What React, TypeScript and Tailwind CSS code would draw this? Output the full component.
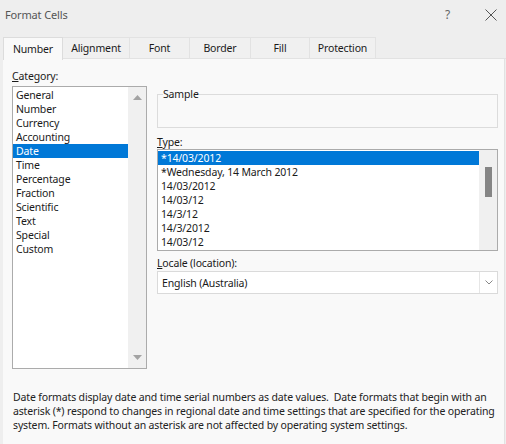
import React from 'react';

const categories = ['General', 'Number', 'Currency', 'Accounting', 'Date', 'Time', 'Percentage', 'Fraction', 'Scientific', 'Text', 'Special', 'Custom'];
const types = ['*14/03/2012', '*Wednesday, 14 March 2012', '14/03/2012', '14/03/12', '14/3/12', '14/3/2012', '14/03/12'];
const tabs = ['Number', 'Alignment', 'Font', 'Border', 'Fill', 'Protection'];
const tabWidths = ['w-[60px]', 'w-[67px]', 'w-[60px]', 'w-[61px]', 'w-[59px]', 'w-[66px]'];

const App: React.FC = () => {
  return (
    <div className="w-[506px] h-[444px] bg-[#eeeeee] text-[10.5px] tracking-[-0.15px] leading-[14px] text-[#1a1a1a] overflow-hidden font-['Segoe_UI','Noto_Sans',sans-serif]">
      {/* title bar */}
      <div className="h-[37px] flex items-start pt-[8px] pl-[5px] pr-[9px]">
        <span className="text-[#555] text-[11px]">Format Cells</span>
        <span className="ml-auto mr-[35px] text-[#666] text-[12px]">?</span>
        <svg width="12" height="12" viewBox="0 0 12 12" className="mt-[1px]">
          <path d="M0.5 0.5 L11.5 11.5 M11.5 0.5 L0.5 11.5" stroke="#555" strokeWidth="1" />
        </svg>
      </div>

      {/* tabs */}
      <div className="flex ml-[3px] h-[22px]">
        {tabs.map((t, i) => (
          <div
            key={t}
            className={`${tabWidths[i]} flex items-center justify-center border-t border-r ${i === 0 ? 'bg-[#f9f9f9] border-l border-[#dcdcdc] relative z-10 h-[23px]' : 'bg-[#f0f0f0] border-[#e2e2e2] border-b'}`}
          >
            {t}
          </div>
        ))}
        <div className="flex-1 border-b border-[#e2e2e2]" />
      </div>

      {/* panel */}
      <div className="ml-[3px] w-[502px] h-[385px] bg-[#f9f9f9] border-r border-[#e2e2e2] pt-[10px] pl-[9px]">
        <div className="flex">
          {/* left column */}
          <div className="w-[135px]">
            <div className="h-[14px]"><span className="underline">C</span>ategory:</div>
            <div className="mt-[3px] h-[283px] border border-[#ababab] bg-white flex">
              <div className="flex-1 pt-[1px]">
                {categories.map(c => (
                  <div key={c} className={`h-[14px] pl-[3px] ${c === 'Date' ? 'bg-[#0078d7] text-white' : ''}`}>{c}</div>
                ))}
              </div>
              <div className="w-[18px] bg-[#f0f0f0] flex flex-col items-center justify-between py-[8px]">
                <svg width="9" height="5" viewBox="0 0 9 5"><path d="M0 5 L4.5 0 L9 5 Z" fill="#a3a3a3" /></svg>
                <svg width="9" height="5" viewBox="0 0 9 5"><path d="M0 0 L4.5 5 L9 0 Z" fill="#a3a3a3" /></svg>
              </div>
            </div>
          </div>

          {/* right column */}
          <div className="ml-[10px] w-[341px] pt-[18px]">
            <fieldset className="h-[41px] border border-[#dcdcdc] px-[5px]">
              <legend className="px-0 leading-[14px]">Sample</legend>
            </fieldset>
            <div className="mt-[7px] h-[14px]"><span className="underline">T</span>ype:</div>
            <div className="h-[102px] border border-[#ababab] bg-white flex">
              <div className="flex-1 pt-[1px]">
                {types.map((t, i) => (
                  <div key={i} className={`h-[14px] pl-[3px] ${i === 0 ? 'bg-[#0078d7] text-white' : ''}`}>{t}</div>
                ))}
              </div>
              <div className="w-[18px] bg-[#f0f0f0] pt-[17px] flex justify-center">
                <div className="w-[7px] h-[30px] bg-[#858585]" />
              </div>
            </div>
            <div className="mt-[5px] h-[14px]"><span className="underline">L</span>ocale (location):</div>
            <div className="mt-[1px] h-[23px] border border-[#dadada] bg-white flex items-center">
              <span className="pl-[4px] flex-1">English (Australia)</span>
              <div className="w-[18px] h-full border-l border-[#e6e6e6] flex items-center justify-center">
                <svg width="8" height="5" viewBox="0 0 8 5"><path d="M0.5 0.5 L4 4 L7.5 0.5" stroke="#888" fill="none" strokeWidth="1" /></svg>
              </div>
            </div>
          </div>
        </div>

        <p className="mt-[21px] w-[490px] pl-[1px] text-[#222]">
          Date formats display date and time serial numbers as date values.&nbsp; Date formats that begin with an asterisk (*) respond to changes in regional date and time settings that are specified for the operating system. Formats without an asterisk are not affected by operating system settings.
        </p>
      </div>
    </div>
  );
};

export default App;
